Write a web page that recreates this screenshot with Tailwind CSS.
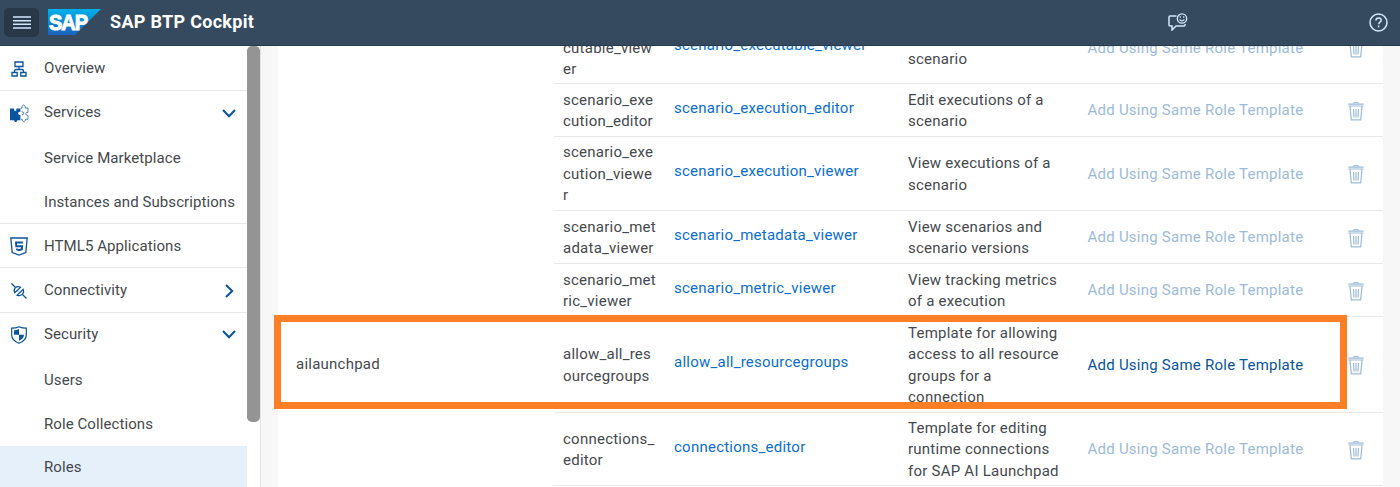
<!DOCTYPE html>
<html lang="en">
<head>
<meta charset="utf-8">
<title>SAP BTP Cockpit</title>
<script src="https://cdn.jsdelivr.net/npm/@tailwindcss/browser@4"></script>
</head>
<body class="h-[487px] w-[1400px] overflow-hidden bg-[#f7f7f7] font-['Roboto','Liberation_Sans',sans-serif] text-[15px] leading-[21.4px] tracking-[0.24px] text-[#45494d]">
<svg class="hidden">
  <symbol id="trash" viewBox="0 0 16 19">
    <path d="M5.2 1.5Q5.6.5 8 .5t2.800 1" fill="none" stroke="currentColor" stroke-width="1.200"/>
    <path d="M.3 1.500h15.400v1.200H.3zM.3 3.400h15.400v1.200H.3z" fill="currentColor"/>
    <path d="M2 4.400l1.300 13.400h9.400L14 4.400M5.500 7l.5 8.500M8 7v8.500M10.500 7l-.5 8.500" fill="none" stroke="currentColor" stroke-width="1.200"/>
  </symbol>
  <symbol id="down" viewBox="0 0 14 9"><path d="M1 1l6 6.200L13 1" fill="none" stroke="currentColor" stroke-width="2"/></symbol>
</svg>
<div class="flex h-full flex-col">
  <header class="flex h-[46px] shrink-0 items-center border-b border-[#273a4e] bg-[#354a5f] pb-px pl-1 text-[#d1e8ff]">
    <button class="flex h-[29px] w-[35px] items-center justify-center rounded-[5px] bg-[#283848]">
      <svg class="h-[13px] w-[18px]" viewBox="0 0 18 13"><path d="M0 1h18M0 4.700h18M0 8.300h18M0 12h18" stroke="#d1e8ff" stroke-width="1.400"/></svg>
    </button>
    <svg class="ml-[9px] h-[26px] w-[53px]" viewBox="0 0 53 26">
      <defs><linearGradient id="g" x1="0" y1="0" x2="0" y2="1"><stop offset="0" stop-color="#00b1eb"/><stop offset="1" stop-color="#1d61bc"/></linearGradient></defs>
      <path d="M0 0h53L27 26H0z" fill="url(#g)"/>
      <text x="1" y="21" textLength="38" lengthAdjust="spacingAndGlyphs" font-family="Liberation Sans, sans-serif" font-weight="700" font-size="22.500" letter-spacing="-1.200" fill="#fff" stroke="#fff" stroke-width="1">SAP</text>
    </svg>
    <h1 class="ml-[9px] w-[160px] text-[18px] font-bold tracking-[0.3px] text-white">SAP BTP Cockpit</h1>
    <svg class="ml-[898px] h-[18px] w-[20px]" viewBox="0 0 20 18" fill="none" stroke="currentColor" stroke-width="1.500">
      <path d="M8.500 3H2Q1 3 1 4v8q0 1 1 1h2v4l4-4h8q1 0 1-1v-1"/>
      <circle cx="14" cy="5.500" r="4.700" stroke-width="1.300"/><path d="M11.500 6.400q2.500 2.800 5 0" stroke-width="1.200"/><path d="M12.300 3.300v1.500M15.700 3.300v1.500" stroke-width="1.200"/>
    </svg>
    <svg class="ml-auto mr-3 h-[19px] w-[19px]" viewBox="0 0 19 19" fill="none" stroke="currentColor" stroke-width="1.500">
      <circle cx="9.500" cy="9.500" r="8.500"/><path d="M6.900 7.600q0-2.600 2.700-2.600t2.600 2.300c0 1.700-2.500 1.900-2.500 3.900"/><path d="M9.600 12.600v1.700"/>
    </svg>
  </header>
  <div class="flex min-h-0 flex-1">
    <aside class="flex w-[261px] shrink-0 border-r border-[#e3e3e3] bg-white">
      <nav class="w-[247px] shrink-0 tracking-[0.08px] *:flex *:h-[44.35px] *:items-center *:pr-[11px] *:pt-[2px]">
        <div class="h-[45px]! border-b border-[#e8e8e8]">
          <svg class="ml-[11px] mr-[17px] size-4 text-[#0854a0]" viewBox="0 0 16 16" fill="none" stroke="currentColor" stroke-width="1.300"><path d="M4 1h8v4.500H4zM1 11.500h5.200v3.500H1zM9.800 11.500H15v3.500H9.800zM8 5.500v3M3.500 11.500v-1.500q0-1.500 1.500-1.500h6q1.500 0 1.500 1.500v1.500"/></svg>
          <span>Overview</span>
        </div>
        <div class="pt-0!">
          <svg class="ml-[10px] mr-[15px] h-[19px] w-[19px] text-[#0854a0]" viewBox="0 0 19 19"><path d="M0 4.500h4v1.700q1.200 1.600 2.400 0V4.500h4v3.200q-2.300-.3-2.300 1.600t2.300 1.600V16.300H7.200v.7q-1.500 2-3 0v-.7H0z" fill="currentColor"/><path d="M11 4.500V4h1V2.200q1.300-2.600 3.200 0V4h2.800v4.500q-2.300-.3-2.300 1.300T18 11.500v3.800h-2.600v1.200q-1.700 2.400-3.300 0v-1.200H11M11.500 10.900q2.300-.2 2.300-1.700t-2.300-1.500" fill="none" stroke="currentColor" stroke-width=".9" stroke-opacity=".75"/></svg>
          <span>Services</span>
          <svg class="ml-auto h-[9px] w-[14px] text-[#0854a0]"><use href="#down"/></svg>
        </div>
        <div class="pl-[44px]"><span>Service Marketplace</span></div>
        <div class="border-b border-[#e8e8e8] pl-[44px]"><span class="whitespace-nowrap">Instances and Subscriptions</span></div>
        <div class="border-b border-[#e8e8e8]">
          <svg class="ml-[10px] mr-4 h-[19px] w-[18px] text-[#0854a0]" viewBox="0 0 18 19" fill="none" stroke="currentColor"><path d="M.8 1h16.400l-1.400 14.500L9 18l-6.800-2.500z" stroke-width="1.300"/><path d="M12.800 5.500H6l.3 3.700h5.800l-.3 3L9 13.200l-2.800-1" stroke-width="1.900"/></svg>
          <span>HTML5 Applications</span>
        </div>
        <div class="border-b border-[#e8e8e8]">
          <svg class="ml-[11px] mr-[17px] size-4 text-[#0854a0]" viewBox="0 0 16 16" fill="none" stroke="currentColor" stroke-width="1.200"><path d="M.5.5l4 4M11.500 11.500l4 4"/><path d="M3.800 9.800Q2.200 7 4.300 4.800t5.300-.6zM6 12.200q3 1.300 5.200-.8t1-5.200z"/><path d="M6 7.500l1 1M9 8.500l.8.800" stroke-width=".8"/></svg>
          <span>Connectivity</span>
          <svg class="ml-auto mr-[2px] h-[14px] w-[9px] text-[#0854a0]" viewBox="0 0 9 14"><path d="M1 1l6.200 6L1 13" fill="none" stroke="currentColor" stroke-width="2"/></svg>
        </div>
        <div class="pt-0!">
          <svg class="ml-[11px] mr-[17px] h-[18px] w-4 text-[#0854a0]" viewBox="0 0 16 18"><path d="M8 .7Q11 2.200 15.300 2.200V9q0 5.500-7.300 8.300Q.7 14.500.7 9V2.200Q5 2.200 8 .7z" fill="none" stroke="currentColor" stroke-width="1.200"/><path d="M8 3v5.700H3V4.200Q6 4.200 8 3zM8 8.700h5q0 3.800-5 6z" fill="currentColor"/></svg>
          <span>Security</span>
          <svg class="ml-auto h-[9px] w-[14px] text-[#0854a0]"><use href="#down"/></svg>
        </div>
        <div class="pl-[44px]"><span>Users</span></div>
        <div class="pl-[44px]"><span>Role Collections</span></div>
        <div class="bg-[#e5f0fa] pl-[44px] pt-0!"><span>Roles</span></div>
      </nav>
      <div class="h-[376px] w-[13px] rounded-[5px] bg-[#949494]"></div>
    </aside>
    <main class="ml-[17px] flex w-[1105px] shrink-0 overflow-hidden bg-white">
      <div class="w-[276px] shrink-0 pl-[18px] pt-[308px]">ailaunchpad</div>
      <div class="-mt-[37px] flex-1 *:grid *:grid-cols-[111px_234px_179.500px_257.500px_1fr] *:items-center *:border-b *:border-[#e8e8e8] *:pl-[9px] *:pt-[2px] *:whitespace-nowrap">
        <div class="h-[75px] pt-[5px]!"><p>scenario_exe<br>cutable_view<br>er</p><a class="pb-[5px] text-[#0a6ed1]">scenario_executable_viewer</a><p>View executables of a<br>scenario</p><b class="font-normal text-[#9dbbd9]">Add Using Same Role Template</b><svg class="ml-[3px] h-[19px] w-4 text-[#9dbbd9]"><use href="#trash"/></svg></div>
        <div class="h-[53px]"><p>scenario_exe<br>cution_editor</p><a class="pb-[5px] text-[#0a6ed1]">scenario_execution_editor</a><p>Edit executions of a<br>scenario</p><b class="font-normal text-[#9dbbd9]">Add Using Same Role Template</b><svg class="ml-[3px] h-[19px] w-4 text-[#9dbbd9]"><use href="#trash"/></svg></div>
        <div class="h-[74px]"><p>scenario_exe<br>cution_viewe<br>r</p><a class="pb-[5px] text-[#0a6ed1]">scenario_execution_viewer</a><p>View executions of a<br>scenario</p><b class="font-normal text-[#9dbbd9]">Add Using Same Role Template</b><svg class="ml-[3px] h-[19px] w-4 text-[#9dbbd9]"><use href="#trash"/></svg></div>
        <div class="h-[53px]"><p>scenario_met<br>adata_viewer</p><a class="pb-[5px] text-[#0a6ed1]">scenario_metadata_viewer</a><p>View scenarios and<br>scenario versions</p><b class="font-normal text-[#9dbbd9]">Add Using Same Role Template</b><svg class="ml-[3px] h-[19px] w-4 text-[#9dbbd9]"><use href="#trash"/></svg></div>
        <div class="h-[53px]"><p>scenario_met<br>ric_viewer</p><a class="pb-[5px] text-[#0a6ed1]">scenario_metric_viewer</a><p>View tracking metrics<br>of a execution</p><b class="font-normal text-[#9dbbd9]">Add Using Same Role Template</b><svg class="ml-[3px] h-[19px] w-4 text-[#9dbbd9]"><use href="#trash"/></svg></div>
        <div class="h-[96px]"><p>allow_all_res<br>ourcegroups</p><a class="pb-[5px] text-[#0a6ed1]">allow_all_resourcegroups</a><p>Template for allowing<br>access to all resource<br>groups for a<br>connection</p><b class="font-normal text-[#0854a0]">Add Using Same Role Template</b><svg class="ml-[3px] h-[19px] w-4 text-[#9dbbd9]"><use href="#trash"/></svg></div>
        <div class="h-[73px]"><p>connections_<br>editor</p><a class="pb-[5px] text-[#0a6ed1]">connections_editor</a><p>Template for editing<br>runtime connections<br>for SAP AI Launchpad</p><b class="font-normal text-[#9dbbd9]">Add Using Same Role Template</b><svg class="ml-[3px] h-[19px] w-4 text-[#9dbbd9]"><use href="#trash"/></svg></div>
      </div>
    </main>
  </div>
</div>
<div class="absolute left-[274px] top-[315px] h-[94px] w-[1073px] border-[7px] border-[#ff7f27]"></div>
</body>
</html>
